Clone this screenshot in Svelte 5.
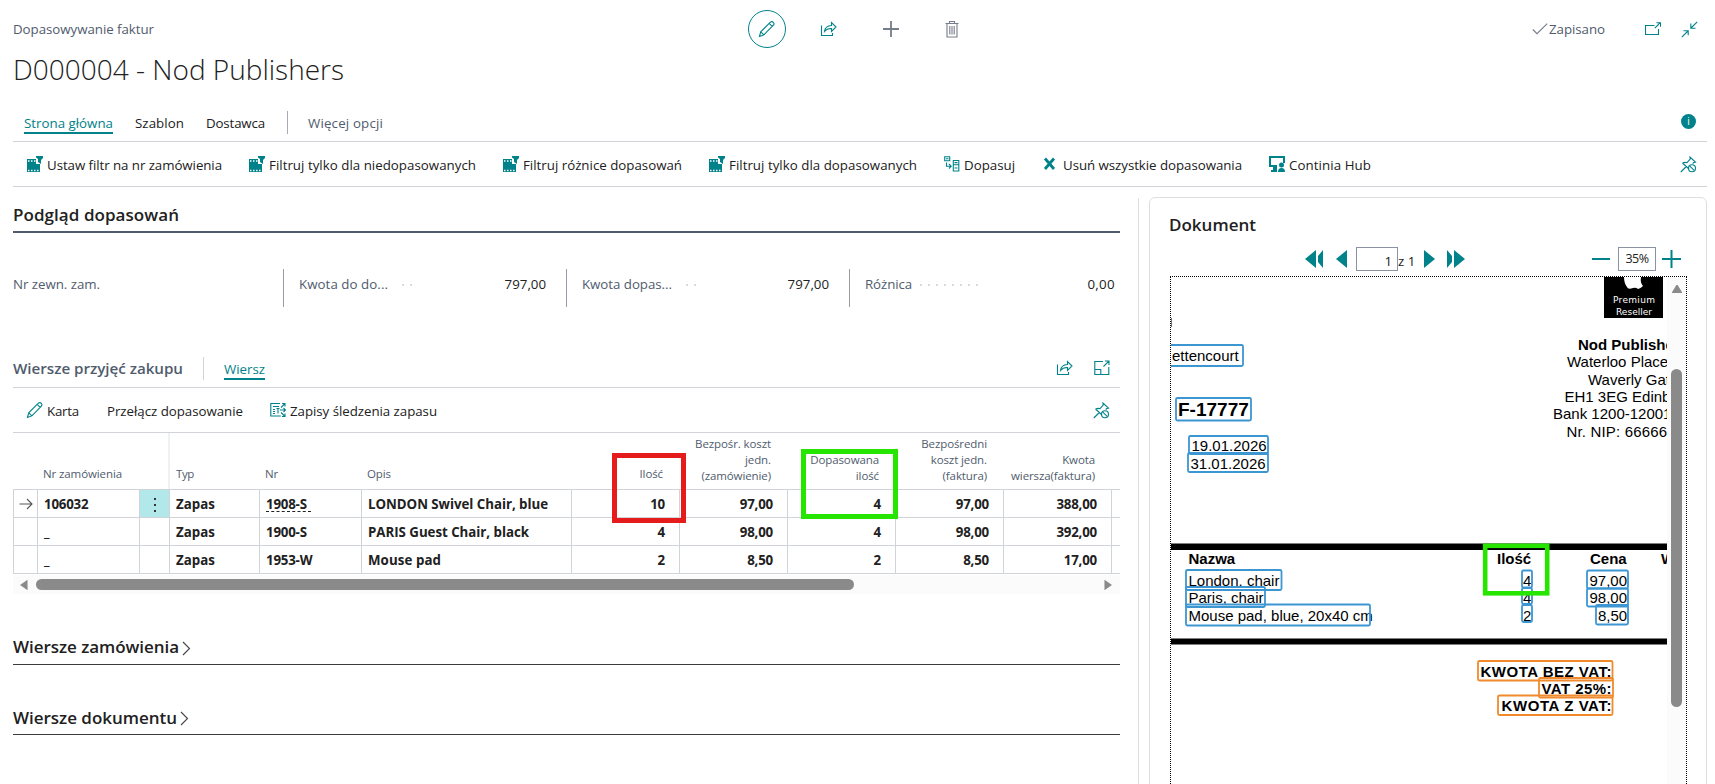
<script lang="ts">
	type Action = { label: string; icon: string; width: number; gap: number };

	const actions: Action[] = [
		{ label: 'Ustaw filtr na nr zamówienia', icon: 'filter', width: 175, gap: 27 },
		{ label: 'Filtruj tylko dla niedopasowanych', icon: 'filter', width: 207, gap: 27 },
		{ label: 'Filtruj różnice dopasowań', icon: 'filter', width: 159, gap: 27 },
		{ label: 'Filtruj tylko dla dopasowanych', icon: 'filter', width: 188, gap: 27 },
		{ label: 'Dopasuj', icon: 'match', width: 51, gap: 28 },
		{ label: 'Usuń wszystkie dopasowania', icon: 'remove', width: 179, gap: 27 },
		{ label: 'Continia Hub', icon: 'hub', width: 82, gap: 0 }
	];

	const fields = [
		{ label: 'Kwota do do...', labelWidth: 89, dots: 2, gap: 14, value: '797,00' },
		{ label: 'Kwota dopas...', labelWidth: 90, dots: 2, gap: 14, value: '797,00' },
		{ label: 'Różnica', labelWidth: 47, dots: 8, gap: 8, value: '0,00' }
	];

	const rows = [
		{ order: '106032', no: '1908-S', name: 'LONDON Swivel Chair, blue', nameWidth: 180, values: ['10', '97,00', '4', '97,00', '388,00'] },
		{ order: '_', no: '1900-S', name: 'PARIS Guest Chair, black', nameWidth: 161, values: ['4', '98,00', '4', '98,00', '392,00'] },
		{ order: '_', no: '1953-W', name: 'Mouse pad', nameWidth: 73, values: ['2', '8,50', '2', '8,50', '17,00'] }
	];

	const amountHeaders = [
		['Ilość'],
		['Bezpośr. koszt', 'jedn.', '(zamówienie)'],
		['Dopasowana', 'ilość'],
		['Bezpośredni', 'koszt jedn.', '(faktura)'],
		['Kwota', 'wiersza(faktura)']
	];

	// invoice page, in the coordinates of the scrolled page
	const texts = [
		{ t: 'ettencourt', x: 1172, y: 361 },
		{ t: 'F-17777', x: 1178, y: 416, size: 19, bold: true },
		{ t: '19.01.2026', x: 1191.5, y: 451 },
		{ t: '31.01.2026', x: 1190.5, y: 468.5 },
		{ t: 'Nod Publishers', x: 1578, y: 350, bold: true },
		{ t: 'Waterloo Place,', x: 1567, y: 367 },
		{ t: 'Waverly Gate', x: 1588, y: 384.5 },
		{ t: 'EH1 3EG Edinburgh', x: 1564.5, y: 401.5 },
		{ t: 'Bank 1200-12001', x: 1553, y: 419 },
		{ t: 'Nr. NIP: 66666', x: 1566.5, y: 436.5, width: 100.5 },
		{ t: 'Nazwa', x: 1188.5, y: 564, bold: true },
		{ t: 'Ilość', x: 1497, y: 564, bold: true },
		{ t: 'Cena', x: 1590, y: 564, bold: true },
		{ t: 'W', x: 1661, y: 564, bold: true },
		{ t: 'London, chair', x: 1188.5, y: 585.5 },
		{ t: 'Paris, chair', x: 1188.5, y: 603 },
		{ t: 'Mouse pad, blue, 20x40 cm', x: 1188.5, y: 620.5 },
		{ t: '4', x: 1523, y: 585.5 },
		{ t: '4', x: 1523, y: 603 },
		{ t: '2', x: 1523, y: 620.5 },
		{ t: '97,00', x: 1589.5, y: 585.5 },
		{ t: '98,00', x: 1589.5, y: 603 },
		{ t: '8,50', x: 1598, y: 620.5 },
		{ t: 'KWOTA BEZ VAT:', x: 1480.5, y: 676.5, bold: true, width: 131 },
		{ t: 'VAT 25%:', x: 1541.5, y: 693.5, bold: true, width: 70 },
		{ t: 'KWOTA Z VAT:', x: 1501.5, y: 711, bold: true, width: 110 }
	];

	const marks = [
		{ x: 1160, y: 345, w: 83, h: 21 },
		{ x: 1176, y: 398, w: 75, h: 22.5 },
		{ x: 1189, y: 436, w: 79, h: 18 },
		{ x: 1188, y: 453, w: 80, h: 19 },
		{ x: 1186, y: 570, w: 95.5, h: 20 },
		{ x: 1186, y: 587, w: 79, h: 20 },
		{ x: 1186, y: 604.5, w: 184, h: 21 },
		{ x: 1522, y: 570.5, w: 10, h: 17 },
		{ x: 1522, y: 588, w: 10, h: 16 },
		{ x: 1522, y: 605, w: 10, h: 17 },
		{ x: 1587, y: 570.5, w: 41, h: 18 },
		{ x: 1587, y: 588.5, w: 41, h: 18 },
		{ x: 1596, y: 605, w: 32, h: 19.5 },
		{ x: 1478, y: 661, w: 134.5, h: 19.5, total: true },
		{ x: 1539, y: 678, w: 74, h: 19.5, total: true },
		{ x: 1498, y: 695.5, w: 114.5, h: 19.5, total: true }
	];

	// adjusts the tracking so that a label takes exactly the given width
	function fit(node: HTMLElement, width: number) {
		node.style.letterSpacing = '0';
		const range = document.createRange();
		range.selectNodeContents(node);
		const natural = range.getBoundingClientRect().width;
		node.style.letterSpacing = `${(width - natural) / (node.textContent ?? ' ').trim().length}px`;
	}
</script>

{#snippet pencil()}
	<svg width="18" height="18" viewBox="0 0 18 18">
		<path d="M1.500 16.500l1.200-4.600L12.400 2.200q1.500-1.300 2.900.1t.1 2.900L5.900 14.900zM2.700 11.900l3.200 3M11.200 3.400l3 3" />
	</svg>
{/snippet}

{#snippet share()}
	<svg width="18" height="16" viewBox="0 0 18 16">
		<path d="M1.500 4.500v10h11v-2.500M4.500 10.500q.5-5.500 7-6V1.500l4.500 4.500-4.500 4.500V7.500q-4.500-.2-7 3z" />
	</svg>
{/snippet}

{#snippet unpin()}
	<svg width="17" height="17" viewBox="0 0 17 17">
		<path d="M.8 16l5.500-5.500M2.500 7l6.500 6M2.500 7q2.500-1 4.500-.3L10.200 3 10 1l5.500 5.200-1.800.3-1 1" />
		<circle cx="12" cy="12.300" r="3.500" />
		<path d="M9.600 9.900l4.800 4.800" />
	</svg>
{/snippet}

{#snippet actionIcon(name: string)}
	<svg width="16" height="16" viewBox="0 0 16 16">
		{#if name === 'filter'}
			<path class="solid" d="M0 3h9v5h4v8H0zM9 0h7v2l-2 2v4l-3-2V3L9 1.500z" />
			<path class="cut" d="M1 5h1.500M4 5h1.500M7 5h1.500M1 14.500h1.500M4 14.500h1.500M7 14.500h1.500M10 14.500h1.500" />
		{:else if name === 'match'}
			<path d="M.7.7h5v4h-5zM2 2.700h2.500M9.300 4.500h5.500v4.300H9.300zM10.500 6.600h3M9.300 8.800h5.500V15H9.300zM10.500 12h3M2.500 6.500v3.700h4.500M5 8l2.200 2.200L5 12.500" />
		{:else if name === 'remove'}
			<path class="thick" d="M2 2.500l9 10.500M11 2.500L2 13" />
		{:else}
			<path class="monitor" d="M8 10H1V1h14v6" />
			<path class="solid" d="M4 11h4v5H2v-2h2zM9 16q0-4 3.500-4T16 16z" />
			<circle class="solid" cx="12.500" cy="9" r="2.500" />
		{/if}
	</svg>
{/snippet}

<div class="page">
	<header class="top">
		<span class="caption" use:fit={141}>Dopasowywanie faktur</span>
		<div class="tools">
			<button class="edit" aria-label="Edytuj">{@render pencil()}</button>
			<button class="share" aria-label="Udostępnij">{@render share()}</button>
			<button class="gray add" aria-label="Nowy">
				<svg width="16" height="16" viewBox="0 0 16 16"><path class="plus" d="M0 8h16M8 0v16" /></svg>
			</button>
			<button class="gray" aria-label="Usuń">
				<svg width="14" height="17" viewBox="0 0 14 17">
					<path d="M.5 2.500h13M4.500 2.500v-2h5v2M2 2.500v13.500h10V2.500M4.800 5v8.500M7 5v8.500M9.200 5v8.500" />
				</svg>
			</button>
		</div>
		<div class="status">
			<svg class="gray" width="16" height="12" viewBox="0 0 16 12"><path d="M.8 6.500L5 10.700 15.200.7" /></svg>
			<span class="saved" use:fit={56}>Zapisano</span>
			<svg class="popup" width="16" height="14" viewBox="0 0 16 14">
				<path d="M9.500 3.500h-9v9h13V7M9.800 6.200L15 1M11.500.700h4v4" />
			</svg>
			<svg width="17" height="17" viewBox="0 0 17 17">
				<path d="M.8 16.200L7 10M2.500 9.700h4.700v4.500M16.200.8L10 7M9.800 2.500v4.700h4.700" />
			</svg>
		</div>
	</header>

	<h1><span use:fit={331}>D000004 - Nod Publishers</span></h1>

	<nav class="tabs">
		<a href="#home" class="active" use:fit={89}>Strona główna</a>
		<a href="#template" use:fit={49}>Szablon</a>
		<a href="#vendor" use:fit={59}>Dostawca</a>
		<span class="bar"></span>
		<a href="#more" class="more" use:fit={75}>Więcej opcji</a>
		<span class="info">i</span>
	</nav>

	<div class="actions">
		{#each actions as action}
			<button class="action" style:margin-right="{action.gap}px">
				{@render actionIcon(action.icon)}
				<span style:width="{action.width}px" use:fit={action.width}>{action.label}</span>
			</button>
		{/each}
		<span class="end">{@render unpin()}</span>
	</div>

	<main>
		<section class="left">
			<h2 class="group"><span use:fit={166}>Podgląd dopasowań</span></h2>

			<div class="fields">
				<div class="field first"><span class="label" use:fit={87}>Nr zewn. zam.</span></div>
				{#each fields as field}
					<div class="field">
						<span class="label" style:width="{field.labelWidth}px" use:fit={field.labelWidth}>{field.label}</span>
						<span class="dots" style:margin-left="{field.gap}px">
							{#each { length: field.dots } as _}<i></i>{/each}
						</span>
						<span class="value" use:fit={field.value.length * 6.9}>{field.value}</span>
					</div>
				{/each}
			</div>

			<div class="subhead">
				<h3><span use:fit={170}>Wiersze przyjęć zakupu</span></h3>
				<span class="bar"></span>
				<a href="#line" class="active" use:fit={41}>Wiersz</a>
				<span class="end">
					{@render share()}
					<svg width="16" height="16" viewBox="0 0 16 16">
						<path d="M9 1.500H.8v13h14V7M.8 9.500h6v5M9.500 6.500L14.800 1.200M11 1h4v4" />
					</svg>
				</span>
			</div>

			<div class="subactions">
				<button class="action">{@render pencil()}<span use:fit={32}>Karta</span></button>
				<button class="action toggle"><span use:fit={136}>Przełącz dopasowanie</span></button>
				<button class="action tracking">
					<svg width="16" height="16" viewBox="0 0 16 16">
						<path d="M10 1.500H.8v12.500h10M3 4.500h6M3 7.500h2M3 9.500h2M3 11.500h2M6.500 6.500h3M8 6.500v5M10 8h5.500M13.500 6l2 2-2 2M11 5.500l3.500-3.500M12 1.500h3v3M11 10.500l3.500 3.500M12 14.500h3v-3" />
					</svg>
					<span use:fit={147}>Zapisy śledzenia zapasu</span>
				</button>
				<span class="end">{@render unpin()}</span>
			</div>

			<div class="table">
				<div class="row head">
					<span></span>
					<span class="cell"><b use:fit={79}>Nr zamówienia</b></span>
					<span></span>
					<span class="cell frozen"><b use:fit={18}>Typ</b></span>
					<span class="cell"><b use:fit={13}>Nr</b></span>
					<span class="cell"><b use:fit={24}>Opis</b></span>
					{#each amountHeaders as lines}
						<span class="cell amount" class:multi={lines.length > 1}>
							{#each lines as line}<b>{line}</b>{/each}
						</span>
					{/each}
				</div>
				{#each rows as row, index}
					<div class="row data">
						<span class="cell pointer">
							{#if index === 0}
								<svg width="14" height="12" viewBox="0 0 14 12"><path d="M.5 6h12.500M8 1l5 5-5 5" /></svg>
							{/if}
						</span>
						<span class="cell">{row.order}</span>
						<span class="cell menu" class:selected={index === 0}>
							{#if index === 0}<i></i><i></i><i></i>{/if}
						</span>
						<span class="cell"><b use:fit={39}>Zapas</b></span>
						<span class="cell"><b class:link={index === 0}>{row.no}</b></span>
						<span class="cell"><b use:fit={row.nameWidth}>{row.name}</b></span>
						{#each row.values as value}
							<span class="cell amount">{value}</span>
						{/each}
						<span class="cell"></span>
					</div>
				{/each}
				<div class="highlight red"></div>
				<div class="highlight green"></div>
			</div>
			<div class="hscroll">
				<svg width="8" height="10" viewBox="0 0 8 10"><path d="M7 .8v8.400L1 5z" /></svg>
				<span class="thumb"></span>
				<svg class="right" width="8" height="10" viewBox="0 0 8 10"><path d="M1 .8v8.400L7 5z" /></svg>
			</div>

			<h2 class="collapsed">
				<span use:fit={166}>Wiersze zamówienia</span>
				<svg width="9" height="15" viewBox="0 0 9 15"><path d="M1 1l6.500 6.500L1 14" /></svg>
			</h2>
			<h2 class="collapsed second">
				<span use:fit={164}>Wiersze dokumentu</span>
				<svg width="9" height="15" viewBox="0 0 9 15"><path d="M1 1l6.500 6.500L1 14" /></svg>
			</h2>
		</section>

		<aside>
			<div class="card">
				<h2><span use:fit={87}>Dokument</span></h2>
				<div class="pager">
					<svg class="first-page" width="20" height="18" viewBox="0 0 20 18"><path d="M12 0v18L1 9zM19 0v18l-5-6V6z" /></svg>
					<svg class="prev" width="11" height="18" viewBox="0 0 11 18"><path d="M11 0v18L0 9z" /></svg>
					<span class="box page-no">1</span>
					<span class="of">z 1</span>
					<svg class="next" width="11" height="18" viewBox="0 0 11 18"><path d="M0 0v18L11 9z" /></svg>
					<svg class="last-page" width="20" height="18" viewBox="0 0 20 18"><path d="M8 0v18l11-9zM1 0v18l5-6V6z" /></svg>
					<svg class="minus" width="18" height="18" viewBox="0 0 18 18"><path d="M0 8h18v2H0z" /></svg>
					<span class="box zoom">35%</span>
					<svg class="zoom-in" width="19" height="18" viewBox="0 0 19 18"><path d="M0 8h8.500V0h2v8H19v2h-8.500v8h-2v-8H0z" /></svg>
				</div>
				<div class="viewer">
					<svg class="invoice" width="496" height="510" viewBox="1171 277 496 510">
						<rect x="1604" y="277" width="59" height="41" />
						<path class="logo" d="M1624 277h17q-1 6 2 9-3 3-5 3-2-2-5-1-5 2-6-1-3-4-3-10z" />
						<g class="badge">
							<text x="1613" y="303" textLength="42">Premium</text>
							<text x="1616" y="314.500" textLength="36">Reseller</text>
						</g>
						<path class="edge" d="M1171.500 318v9" />
						<rect x="1171" y="543.500" width="496" height="6.500" />
						<rect x="1171" y="638.500" width="496" height="6" />
						{#each texts as item}
							<text x={item.x} y={item.y} font-size={item.size ?? 15} class:bold={item.bold} textLength={item.width}>{item.t}</text>
						{/each}
						{#each marks as mark}
							<rect class="mark" class:total={mark.total} x={mark.x} y={mark.y} width={mark.w} height={mark.h} rx="1.500" />
						{/each}
						<rect class="callout" x="1485.200" y="545.800" width="62" height="47.500" />
					</svg>
					<div class="vscroll">
						<svg width="10" height="8" viewBox="0 0 10 8"><path d="M5 0L9.500 7.500h-9z" /></svg>
						<span class="thumb"></span>
					</div>
				</div>
			</div>
		</aside>
	</main>
</div>

<style>
	:global(body) {
		margin: 0;
		background: #fff;
	}

	.page {
		--teal: #00828a;
		--slate: #505c6d;
		--line: #d0d3d8;
		width: 1715px;
		height: 784px;
		overflow: hidden;
		font-family: 'Open Sans', 'Noto Sans', sans-serif;
		font-size: 13.3px;
		color: #212121;
	}

	.page :global(*) {
		box-sizing: border-box;
	}

	span,
	a,
	b {
		white-space: nowrap;
	}

	b {
		font-weight: inherit;
	}

	svg {
		flex: none;
		fill: none;
		stroke: var(--teal);
		stroke-width: 1.1;
	}

	button {
		display: flex;
		align-items: center;
		padding: 0;
		border: 0;
		background: none;
		font: inherit;
		color: inherit;
	}

	h1,
	h2,
	h3 {
		margin: 0;
		font-weight: 600;
	}

	.top {
		display: flex;
		align-items: center;
		height: 50px;
		padding: 8px 17px 0 13px;
	}

	.caption,
	.saved {
		color: var(--slate);
	}

	.caption {
		width: 735px;
	}

	.tools,
	.status {
		display: flex;
		align-items: center;
	}

	.edit {
		justify-content: center;
		width: 38px;
		height: 38px;
		border: 1px solid var(--teal);
		border-radius: 50%;
	}

	.share {
		margin: 0 45px 0 34px;
	}

	.add {
		margin-right: 46px;
	}

	.gray,
	.gray svg {
		stroke: #757c8a;
	}

	.plus {
		stroke-width: 1.8;
	}

	.status {
		margin-left: auto;
	}

	.saved {
		width: 56px;
		margin: 0 40px 0 1px;
	}

	.popup {
		margin-right: 20px;
	}

	h1 {
		height: 38px;
		padding-left: 13px;
		font-size: 28px;
		font-weight: 300;
		line-height: 38px;
	}

	.tabs {
		display: flex;
		height: 54px;
		margin: 0 8px 0 13px;
		padding: 23px 11px 0;
		border-bottom: 1px solid var(--line);
	}

	.tabs a {
		height: 23px;
		margin-right: 22px;
		line-height: 24px;
		color: inherit;
		text-decoration: none;
	}

	.tabs a.active,
	.subhead .active {
		border-bottom: 2px solid var(--teal);
		color: var(--teal);
	}

	.bar {
		width: 1px;
		height: 23px;
		margin-right: 20px;
		background: #a6acb6;
	}

	.tabs a.more {
		color: var(--slate);
	}

	.info {
		width: 15px;
		height: 15px;
		margin: 3px 0 0 auto;
		border-radius: 50%;
		background: var(--teal);
		color: #fff;
		font-size: 10px;
		line-height: 15px;
		text-align: center;
	}

	.actions {
		display: flex;
		align-items: center;
		height: 45px;
		margin: 0 8px 0 13px;
		padding: 0 10px 0 14px;
		border-bottom: 1px solid var(--line);
	}

	.action {
		gap: 4px;
	}

	.action span {
		padding-top: 1px;
	}

	.solid {
		fill: var(--teal);
		stroke: none;
	}

	.cut {
		stroke: #fff;
		stroke-width: 1.5;
	}

	.thick {
		stroke-width: 2.8;
	}

	.monitor {
		stroke-width: 2;
	}

	.end {
		display: flex;
		gap: 20px;
		margin-left: auto;
	}

	main {
		display: flex;
		align-items: flex-start;
	}

	.left {
		width: 1107px;
		margin-left: 13px;
		padding-top: 11px;
	}

	.group {
		height: 35px;
		border-bottom: 2px solid var(--slate);
		font-size: 17px;
		line-height: 33px;
	}

	.fields {
		display: flex;
		height: 38px;
		margin-top: 36px;
		line-height: 31px;
	}

	.field {
		display: flex;
		width: 283px;
		padding: 0 5px 0 15px;
		border-left: 1px solid #979ca5;
	}

	.field:last-child {
		width: 271px;
	}

	.field.first {
		width: 270px;
		padding: 0;
		border: 0;
	}

	.field:not(.first):not(:last-child) {
		padding-right: 20px;
	}

	.label {
		color: var(--slate);
	}

	.dots {
		display: flex;
		align-items: center;
		gap: 6px;
		height: 32px;
	}

	.dots i {
		width: 2px;
		height: 2px;
		background: #d8dade;
	}

	.value {
		margin-left: auto;
	}

	.subhead {
		display: flex;
		height: 31px;
		margin-top: 50px;
		border-bottom: 1px solid var(--line);
		line-height: 24px;
	}

	h3 {
		width: 190px;
		color: var(--slate);
		font-size: 15.2px;
		line-height: 23px;
	}

	.subhead .active {
		height: 23px;
		text-decoration: none;
	}

	.subhead .bar {
		background: var(--line);
	}

	.subhead .end {
		padding: 3px 10px 0 0;
	}

	.subactions {
		display: flex;
		align-items: center;
		height: 45px;
		padding: 0 10px 0 13px;
		border-bottom: 1px solid var(--line);
	}

	.subactions .action {
		gap: 3px;
	}

	.subactions .action span {
		padding-top: 2px;
	}

	.toggle {
		margin: 0 27px 0 28px;
	}

	.tracking span {
		margin-left: 1px;
	}

	.table {
		position: relative;
		overflow: hidden;
	}

	.row {
		display: grid;
		grid-template-columns: 24px 102px 30px 90px 102px 210px repeat(5, 108px) 9px;
	}

	.head {
		height: 56px;
		color: var(--slate);
		font-size: 11.5px;
		line-height: 16px;
	}

	.head .cell {
		display: flex;
		flex-direction: column;
		justify-content: flex-end;
		align-items: flex-start;
		padding: 0 0 7px 6px;
	}

	.head b {
		font-weight: 400;
		letter-spacing: -0.1px;
	}

	.head .frozen {
		margin-left: -1px;
		border-left: 2px solid #f0f1f3;
	}

	.head .amount {
		align-items: flex-end;
		padding-right: 16px;
	}

	.head .multi {
		padding-bottom: 5px;
	}

	.data {
		height: 28px;
		border-top: 1px solid var(--line);
		font-weight: 700;
		line-height: 29px;
	}

	.data:nth-child(4) {
		height: 29px;
		border-bottom: 1px solid var(--line);
	}

	.data .cell {
		height: 27px;
		padding-left: 6px;
		border-left: 1px solid var(--line);
		letter-spacing: -0.2px;
	}

	.data .amount {
		padding-right: 14px;
		text-align: right;
	}

	.data .pointer {
		display: flex;
		align-items: center;
		padding-left: 5px;
	}

	.pointer svg {
		stroke: #555;
	}

	.data .menu {
		display: flex;
		flex-direction: column;
		align-items: center;
		justify-content: center;
		gap: 4px;
		padding: 3px 0 0;
	}

	.menu i {
		width: 2px;
		height: 2px;
		background: #333;
	}

	.menu.selected {
		background: #b2e8ea;
	}

	.link {
		display: block;
		width: 45px;
		height: 22px;
		border-bottom: 1px dashed #212121;
	}

	.highlight {
		position: absolute;
		border: 5px solid #e61c1c;
	}

	.red {
		left: 599px;
		top: 20px;
		width: 74px;
		height: 70px;
	}

	.green {
		left: 788px;
		top: 16px;
		width: 97px;
		height: 70px;
		border-color: #26e600;
	}

	.hscroll {
		display: flex;
		align-items: center;
		height: 19px;
		margin-top: 1px;
		padding: 0 8px 0 7px;
		background: #fbfbfb;
	}

	.hscroll svg,
	.vscroll svg {
		fill: #8a8a8a;
		stroke: #8a8a8a;
	}

	.hscroll .thumb {
		width: 818px;
		height: 11px;
		margin-left: 8px;
		border-radius: 6px;
		background: #8a8a8a;
	}

	.hscroll .right {
		margin-left: auto;
	}

	.collapsed {
		display: flex;
		align-items: center;
		gap: 3px;
		height: 36px;
		margin-top: 35px;
		border-bottom: 1px solid #3c3c3c;
		font-size: 17px;
	}

	.collapsed.second {
		height: 35px;
	}

	.collapsed svg {
		margin-top: 3px;
		stroke: #444;
	}

	aside {
		height: 590px;
		margin: 11px 0 0 18px;
		padding-left: 10px;
		border-left: 1px solid #dcdee1;
	}

	.card {
		width: 558px;
		height: 620px;
		margin-top: -1px;
		padding-left: 20px;
		border: 1px solid #dcdee1;
		border-radius: 6px;
	}

	.card h2 {
		height: 49px;
		font-size: 17px;
		line-height: 53px;
		text-indent: -1px;
	}

	.pager {
		display: flex;
		align-items: center;
		height: 24px;
	}

	.pager svg {
		fill: var(--teal);
		stroke: none;
	}

	.first-page {
		margin-left: 134px;
	}

	.prev {
		margin-left: 12px;
	}

	.box {
		height: 24px;
		border: 1px solid #8a93a3;
		line-height: 22px;
	}

	.page-no {
		width: 42px;
		margin-left: 9px;
		padding: 2px 5px 0 0;
		text-align: right;
	}

	.of {
		width: 17px;
		padding-top: 4px;
	}

	.next {
		margin-left: 9px;
	}

	.last-page {
		margin-left: 11px;
	}

	.minus {
		margin-left: 126px;
	}

	.zoom {
		width: 38px;
		margin: 0 6px 0 8px;
		font-size: 12.5px;
		letter-spacing: -0.5px;
		text-align: center;
	}

	.viewer {
		display: flex;
		width: 517px;
		height: 530px;
		margin-top: 5px;
		border: 1px dotted #000;
	}

	.invoice {
		fill: #000;
		stroke: none;
		font-family: 'Liberation Sans', Arial, sans-serif;
	}

	.bold {
		font-weight: 700;
	}

	.logo {
		fill: #fff;
	}

	.badge {
		fill: #fff;
		font-family: 'DejaVu Sans', sans-serif;
		font-size: 9px;
	}

	.edge {
		stroke: #777;
	}

	.mark {
		fill: none;
		stroke: #3c96d2;
		stroke-width: 1.8;
	}

	.mark.total {
		stroke: #f08a2c;
	}

	.callout {
		fill: none;
		stroke: #26e600;
		stroke-width: 4.6;
	}

	.vscroll {
		display: flex;
		flex-direction: column;
		align-items: center;
		width: 19px;
		padding-top: 8px;
		background: #fbfbfb;
	}

	.vscroll .thumb {
		width: 11px;
		height: 338px;
		margin-top: 76px;
		border-radius: 6px;
		background: #8a8a8a;
	}
</style>
